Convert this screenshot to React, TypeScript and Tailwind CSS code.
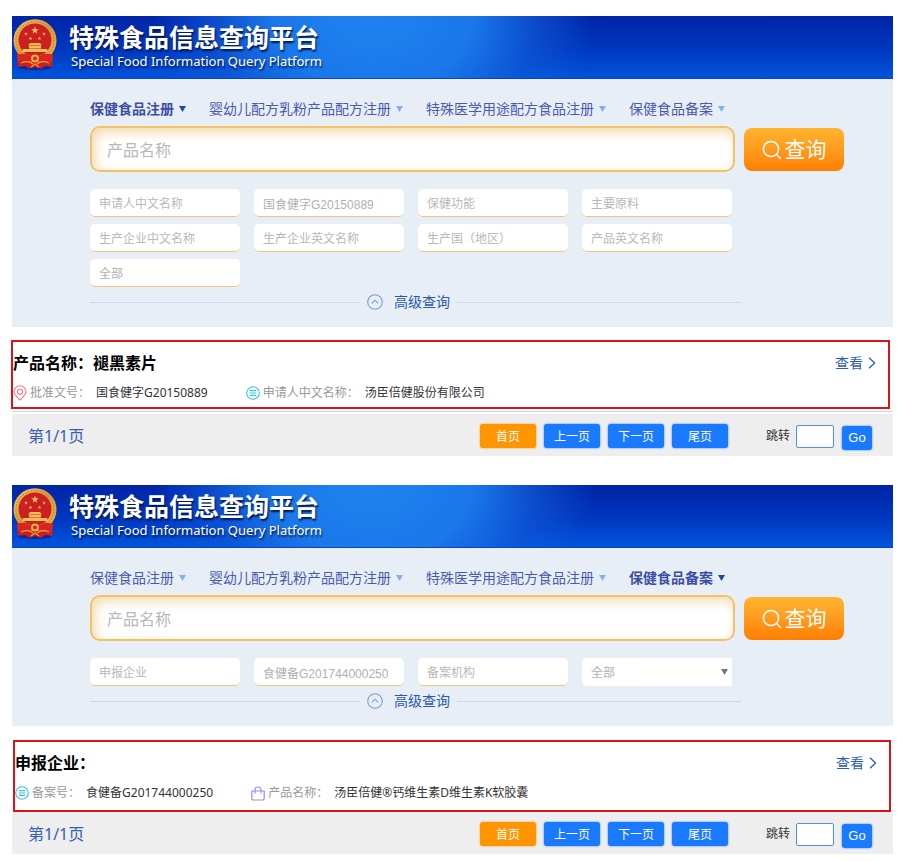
import { useId, type ReactNode } from "react";

const SANS = "font-['Noto_Sans','Noto_Sans_CJK_SC',sans-serif]";
const FIELD_FONT = "font-['Liberation_Sans','Noto_Sans_CJK_SC',sans-serif]";

type Field = { label: string; value?: string; kind?: "text" | "plainSelect" | "select" };
type Detail = { icon: ReactNode; label: string; value: string };

function Emblem() {
  const id = useId();
  const star = "M0 -1 L0.24 -0.32 L0.95 -0.31 L0.38 0.12 L0.59 0.81 L0 0.4 L-0.59 0.81 L-0.38 0.12 L-0.95 -0.31 L-0.24 -0.32 Z";
  return (
    <svg width="44" height="51" viewBox="0 0 44 51" className="shrink-0" aria-hidden="true">
      <defs>
        <linearGradient id={id} x1="0" y1="0" x2="1" y2="1">
          <stop offset="0" stopColor="#f3c45c" />
          <stop offset="0.5" stopColor="#dd9a38" />
          <stop offset="1" stopColor="#f0b94a" />
        </linearGradient>
      </defs>
      <ellipse cx="22" cy="48" rx="17" ry="3" fill="#02187a" opacity="0.6" />
      <path d="M4 33 L40 33 L39 48 L32 47 L28 50 L22 48 L16 50 L12 47 L5 48 Z" fill="#cf1c1c" />
      <ellipse cx="22" cy="21.5" rx="21.5" ry="21.3" fill={`url(#${id})`} />
      <ellipse cx="22" cy="21.5" rx="19" ry="18.8" fill="none" stroke="#c4842f" strokeWidth="1.2" strokeDasharray="1.6 1.4" />
      <circle cx="22" cy="21" r="16.5" fill="#cc1f22" />
      <path d={star} transform="translate(22 11.5) scale(4)" fill="#f5c860" />
      <path d={star} transform="translate(13 15) scale(2)" fill="#f0b94a" />
      <path d={star} transform="translate(31 15) scale(2)" fill="#f0b94a" />
      <path d={star} transform="translate(17.5 19.5) scale(2)" fill="#f0b94a" />
      <path d={star} transform="translate(26.5 19.5) scale(2)" fill="#f0b94a" />
      <path d="M17 24 H27 L29 26.5 H15 Z M16 27 H28 V29.5 H16 Z M10 30 H34 L35 33 H9 Z" fill="#f2bf55" />
      <path d="M4 36 Q12 33 17 37 Q22 34 27 37 Q32 33 40 36 L39 44 Q31 40 27 43 Q22 40 17 43 Q12 40 5 44 Z" fill="#d8261f" />
      <circle cx="22" cy="39.5" r="3" fill="none" stroke="#eeb04a" strokeWidth="2" />
      <path d="M8 44 Q15 41 20 45 M36 44 Q29 41 24 45 M18 48 L22 45 L26 48" fill="none" stroke="#e9a245" strokeWidth="1.3" />
    </svg>
  );
}

function PinIcon() {
  return (
    <svg width="14" height="16" viewBox="0 0 14 16" fill="none" stroke="#f47c80" strokeWidth="1.1" aria-hidden="true">
      <path d="M7 15 C4 12 1 9.8 1 6.8 A6 6 0 0 1 13 6.8 C13 9.8 10 12 7 15 Z" />
      <circle cx="7" cy="6.8" r="2.6" />
    </svg>
  );
}

function ListIcon() {
  return (
    <svg width="14" height="14" viewBox="0 0 14 14" fill="none" stroke="#35c3e6" strokeWidth="1.1" aria-hidden="true">
      <circle cx="7" cy="7" r="6.3" />
      <path d="M3.8 4.6 H10.2 M3.8 7 H10.2 M3.8 9.4 H10.2" />
    </svg>
  );
}

function BagIcon() {
  return (
    <svg width="14" height="15" viewBox="0 0 14 15" fill="none" stroke="#8b93f2" strokeWidth="1.2" aria-hidden="true">
      <path d="M0.8 5 H13.2 V12.4 Q13.2 14 11.6 14 H2.4 Q0.8 14 0.8 12.4 Z" />
      <path d="M4 7.5 V4 Q4 1 7 1 Q10 1 10 4 V7.5" />
    </svg>
  );
}

function Header() {
  return (
    <header className="flex h-[63px] items-start border-b border-[#0b45bd] bg-[radial-gradient(ellipse_25%_260%_at_41%_0%,#1f82f0_0%,#1a78ea_45%,#1058d8aa_75%,transparent_100%),linear-gradient(180deg,#0024a6_0%,#0038c0_55%,#0055dc_100%)] pt-[3px] pl-px">
      <Emblem />
      <div className="ml-3 pt-1 text-white [text-shadow:1px_2px_2px_#00144e]">
        <h1 className="text-[25px] leading-7 font-bold">特殊食品信息查询平台</h1>
        <p className="mt-0.5 ml-0.5 text-[13px] leading-4">Special Food Information Query Platform</p>
      </div>
    </header>
  );
}

const TABS = ["保健食品注册", "婴幼儿配方乳粉产品配方注册", "特殊医学用途配方食品注册", "保健食品备案"];

function Tabs({ active }: { active: string }) {
  return (
    <nav className="flex flex-wrap gap-x-[23px]">
      {TABS.map((tab) => {
        const on = tab === active;
        return (
          <button
            key={tab}
            type="button"
            className={`flex items-center gap-[5px] text-sm leading-5 whitespace-nowrap ${on ? "font-bold text-[#3c4da6]" : "text-[#4a5ab0]"}`}
          >
            {tab}
            <svg width="7" height="6" viewBox="0 0 7 6" fill={on ? "#1c4aa6" : "#7fb2f5"} aria-hidden="true">
              <path d="M0 0 H7 L3.5 6 Z" />
            </svg>
          </button>
        );
      })}
    </nav>
  );
}

function FieldBox({ field }: { field: Field }) {
  const base = `h-7 w-full min-w-0 appearance-none bg-white px-[9px] pt-0.5 text-xs text-[#b0b0b0] outline-none placeholder:text-[#b8b8b8] ${FIELD_FONT}`;
  if (field.kind === "select") {
    return (
      <div className="relative">
        <select aria-label={field.label} className={`${base} rounded-l-[5px]`}>
          <option>全部</option>
        </select>
        <svg width="7" height="6" viewBox="0 0 7 6" fill="#777" className="pointer-events-none absolute top-[11px] right-1" aria-hidden="true">
          <path d="M0 0 H7 L3.5 6 Z" />
        </svg>
      </div>
    );
  }
  if (field.kind === "plainSelect") {
    return (
      <select aria-label={field.label} className={`${base} rounded-[5px] border-b border-[#f0c67a]`}>
        <option>全部</option>
      </select>
    );
  }
  return (
    <input
      type="text"
      aria-label={field.label}
      placeholder={field.value ? undefined : field.label}
      defaultValue={field.value}
      className={`${base} rounded-[5px] border-b border-[#f0c67a]`}
    />
  );
}

function SearchPanel({ active, fields }: { active: string; fields: Field[] }) {
  return (
    <form className="bg-[#e7eef6] pt-5 pr-[49px] pb-[15px] pl-[78px]" onSubmit={(e) => e.preventDefault()}>
      <Tabs active={active} />
      <div className="mt-[7px] flex items-center gap-[9px]">
        <input
          type="text"
          aria-label="产品名称"
          placeholder="产品名称"
          className={`h-[46px] min-w-0 flex-1 rounded-[10px] border-2 border-[#f2c168] bg-white px-[15px] pt-[3px] text-base shadow-[inset_3px_4px_12px_#f0d9a8] outline-none placeholder:text-[#b8b8b8] ${FIELD_FONT}`}
        />
        <button
          type="submit"
          className="flex h-[43px] w-[100px] items-center justify-center gap-[3px] rounded-lg bg-linear-to-b from-[#ffb52e] to-[#ff7e00] pt-0.5 text-[21px] text-white"
        >
          <svg width="20" height="20" viewBox="0 0 20 20" fill="none" stroke="#fff" strokeWidth="1.5" strokeLinecap="round" aria-hidden="true">
            <circle cx="9" cy="9" r="7.6" />
            <path d="M14.3 14.3 L18.5 18.5" />
          </svg>
          查询
        </button>
      </div>
      <div className="mt-[17px] mr-28 grid grid-cols-4 gap-x-[14px] gap-y-[7px]">
        {fields.map((f) => (
          <FieldBox key={f.label} field={f} />
        ))}
      </div>
      <div className="mt-[5px] mr-[103px] flex items-center">
        <span className="h-px w-[270px] shrink bg-[#cad8ea]" />
        <button type="button" className="mx-[7px] flex items-center gap-[11px] text-sm leading-5 whitespace-nowrap text-[#2857b4]">
          <svg width="16" height="16" viewBox="0 0 16 16" fill="none" stroke="#7d9dd0" strokeWidth="1.1" aria-hidden="true">
            <circle cx="8" cy="8" r="7.3" />
            <path d="M4.8 9.4 L8 6.2 L11.2 9.4" />
          </svg>
          高级查询
        </button>
        <span className="h-px flex-1 bg-[#cad8ea]" />
      </div>
    </form>
  );
}

function Result({ title, details, className }: { title: string; details: Detail[]; className: string }) {
  return (
    <article className={`border-2 border-[#d8141a] bg-white pt-[9px] ${className}`}>
      <div className="flex items-center justify-between pr-3">
        <h2 className="text-base leading-6 font-bold text-black">{title}</h2>
        <a href="#detail" className="flex items-center gap-[5px] text-sm leading-5 text-[#2f5cb8]">
          查看
          <svg width="8" height="12" viewBox="0 0 8 12" fill="none" stroke="#2f5cb8" strokeWidth="1.3" aria-hidden="true">
            <path d="M1 0.8 L6.6 6 L1 11.2" />
          </svg>
        </a>
      </div>
      <dl className="mt-2 flex flex-wrap gap-x-[38px] text-xs leading-5">
        {details.map((d) => (
          <div key={d.label} className="flex items-center">
            {d.icon}
            <dt className="ml-[3px] text-[#999]">{d.label}：</dt>
            <dd className="ml-[6px] text-[#333]">{d.value}</dd>
          </div>
        ))}
      </dl>
    </article>
  );
}

function Pager() {
  const id = useId();
  return (
    <footer className="flex h-[42px] items-center bg-[#eeeeee] pt-0.5 pr-[21px] pl-4">
      <span className="flex-1 text-base text-[#3560b5]">第1/1页</span>
      <div className="flex gap-2 text-xs text-white">
        {["首页", "上一页", "下一页", "尾页"].map((p, i) => (
          <button
            key={p}
            type="button"
            className={`h-6 w-14 rounded-[3px] pt-px ${i === 0 ? "bg-[#ff9500] shadow-[0_0_2px_#ff9500]" : "bg-[#1a7aff] shadow-[0_0_2px_#1a7aff]"}`}
          >
            {p}
          </button>
        ))}
      </div>
      <label htmlFor={id} className="ml-[38px] text-xs text-[#333]">
        跳转
      </label>
      <input id={id} type="text" className="ml-[6px] h-[23px] w-[38px] rounded-xs border border-[#4a90f0] bg-white px-1 text-xs" />
      <button
        type="button"
        className={`mt-[3px] ml-2 h-6 w-[30px] rounded-[3px] bg-[#1a7aff] text-[13px] text-white shadow-[0_0_2px_#1a7aff] ${FIELD_FONT}`}
      >
        Go
      </button>
    </footer>
  );
}

const REGISTRATION_FIELDS: Field[] = [
  { label: "申请人中文名称" },
  { label: "批准文号", value: "国食健字G20150889" },
  { label: "保健功能" },
  { label: "主要原料" },
  { label: "生产企业中文名称" },
  { label: "生产企业英文名称" },
  { label: "生产国（地区）" },
  { label: "产品英文名称" },
  { label: "类别", kind: "plainSelect" },
];

const FILING_FIELDS: Field[] = [
  { label: "申报企业" },
  { label: "备案号", value: "食健备G201744000250" },
  { label: "备案机构" },
  { label: "类别", kind: "select" },
];

export default function App() {
  return (
    <main className={`bg-white pt-4 pr-[6px] pb-2 pl-3 ${SANS}`}>
      <section>
        <Header />
        <SearchPanel active="保健食品注册" fields={REGISTRATION_FIELDS} />
        <Result
          title="产品名称：褪黑素片"
          details={[
            { icon: <PinIcon />, label: "批准文号", value: "国食健字G20150889" },
            { icon: <ListIcon />, label: "申请人中文名称", value: "汤臣倍健股份有限公司" },
          ]}
          className="mt-[13px] mr-[3px] -ml-px pb-1"
        />
        <div className="mt-0.5 mb-0.5 h-px bg-[#d9d4d0]" />
        <Pager />
      </section>
      <section className="mt-[29px]">
        <Header />
        <SearchPanel active="保健食品备案" fields={FILING_FIELDS} />
        <Result
          title="申报企业："
          details={[
            { icon: <ListIcon />, label: "备案号", value: "食健备G201744000250" },
            { icon: <BagIcon />, label: "产品名称", value: "汤臣倍健®钙维生素D维生素K软胶囊" },
          ]}
          className="mt-[14px] mr-[2px] ml-px pb-[7px]"
        />
        <Pager />
      </section>
    </main>
  );
}
